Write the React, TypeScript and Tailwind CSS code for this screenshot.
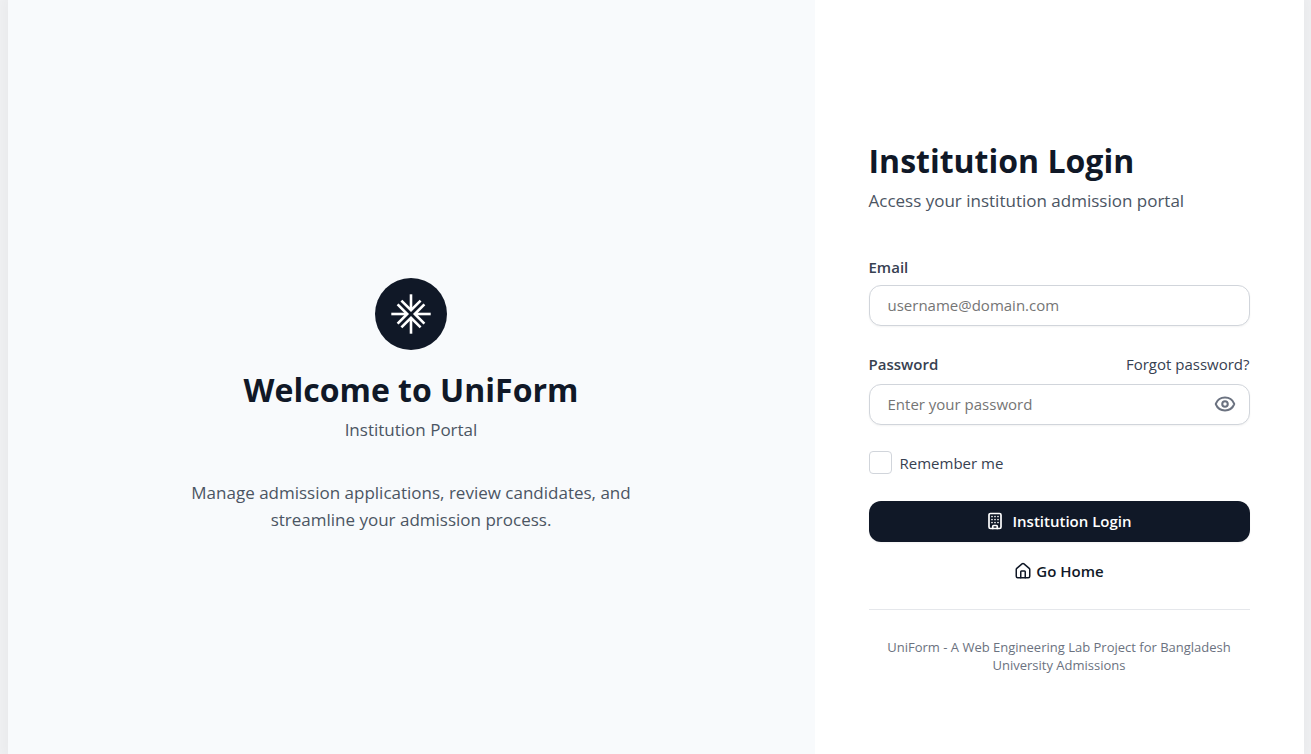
import { useState } from "react";
import { Building, Eye, EyeOff, House } from "lucide-react";

function Logo() {
  return (
    <div className="flex size-18 items-center justify-center rounded-full bg-[#101827] text-white">
      <svg
        aria-hidden="true"
        viewBox="0 0 40 40"
        className="size-10"
        fill="none"
        stroke="currentColor"
        strokeWidth="2.6"
      >
        {[0, 90, 180, 270].map((angle) => (
          <g key={angle} transform={`rotate(${angle} 20 20)`}>
            <path d="M20 0.3V16" />
            <path d="M10.4 6.6L20 16.2L29.6 6.6" />
          </g>
        ))}
      </svg>
    </div>
  );
}

function WelcomePanel() {
  return (
    <section className="flex flex-col items-center justify-center bg-[#f8fafc] px-12 pt-14 text-center">
      <Logo />
      <h2 className="mt-5 text-[32px] leading-10 font-bold text-[#101827]">Welcome to UniForm</h2>
      <p className="mt-1.5 text-[17px] leading-[27px] text-[#4b5563]">Institution Portal</p>
      <p className="mt-9 max-w-[460px] text-[17px] leading-[27px] text-[#4b5563]">
        Manage admission applications, review candidates, and streamline your admission process.
      </p>
    </section>
  );
}

const fieldClass =
  "h-[41px] w-full rounded-xl border border-[#d1d5db] bg-white pl-[18px] text-[15px] text-[#101827] shadow-xs placeholder:text-[#757575]";

function LoginPanel() {
  const [visible, setVisible] = useState(false);

  return (
    <section className="flex flex-col justify-center bg-white px-[54px] pt-[60px]">
      <h1 className="text-[32px] leading-10 font-bold text-[#101827]">Institution Login</h1>
      <p className="mt-1.5 text-[17px] leading-7 text-[#4b5563]">Access your institution admission portal</p>

      <form className="mt-10" onSubmit={(event) => event.preventDefault()}>
        <label htmlFor="email" className="block text-[15px] leading-6 font-semibold text-[#374151]">
          Email
        </label>
        <input id="email" type="email" placeholder="username@domain.com" className={`${fieldClass} mt-1.5 pr-[18px]`} />

        <div className="mt-[26px] flex items-center justify-between text-[15px] leading-6 text-[#374151]">
          <label htmlFor="password" className="font-semibold">
            Password
          </label>
          <a href="#forgot-password">Forgot password?</a>
        </div>
        <div className="relative mt-2">
          <input
            id="password"
            type={visible ? "text" : "password"}
            placeholder="Enter your password"
            className={`${fieldClass} pr-12`}
          />
          <button
            type="button"
            aria-label={visible ? "Hide password" : "Show password"}
            onClick={() => setVisible(!visible)}
            className="absolute inset-y-0 right-3.5 flex items-center text-[#6b7280]"
          >
            {visible ? <EyeOff size={22} strokeWidth={2.25} /> : <Eye size={22} strokeWidth={2.25} />}
          </button>
        </div>

        <div className="mt-[26px] flex items-center gap-2">
          <input
            id="remember"
            type="checkbox"
            className="size-[23px] appearance-none rounded border border-[#d1d5db] bg-white checked:bg-[#101827]"
          />
          <label htmlFor="remember" className="text-[15px] leading-6 text-[#374151]">
            Remember me
          </label>
        </div>

        <button
          type="submit"
          className="mt-[26px] flex h-[41px] w-full items-center justify-center gap-2 rounded-xl bg-[#101827] text-[15px] font-semibold text-white shadow-xs"
        >
          <Building size={18} strokeWidth={2.25} />
          Institution Login
        </button>
      </form>

      <a
        href="#home"
        className="mt-[17px] flex items-center justify-center gap-1 self-center text-[15px] leading-6 font-semibold text-[#101827]"
      >
        <House size={18} />
        Go Home
      </a>

      <footer className="mt-[26px] border-t border-[#e5e7eb] px-4 pt-7 text-center text-[13px] leading-[18px] text-[#6b7280]">
        UniForm - A Web Engineering Lab Project for Bangladesh University Admissions
      </footer>
    </section>
  );
}

export default function App() {
  return (
    <div className="min-h-screen bg-[#f3f4f6] font-['Open_Sans','Noto_Sans',sans-serif]">
      <main className="mx-auto grid min-h-screen max-w-[1296px] grid-cols-[minmax(0,1fr)_489px] shadow-[0_0_16px_8px_rgba(0,0,0,0.045)]">
        <WelcomePanel />
        <LoginPanel />
      </main>
    </div>
  );
}
